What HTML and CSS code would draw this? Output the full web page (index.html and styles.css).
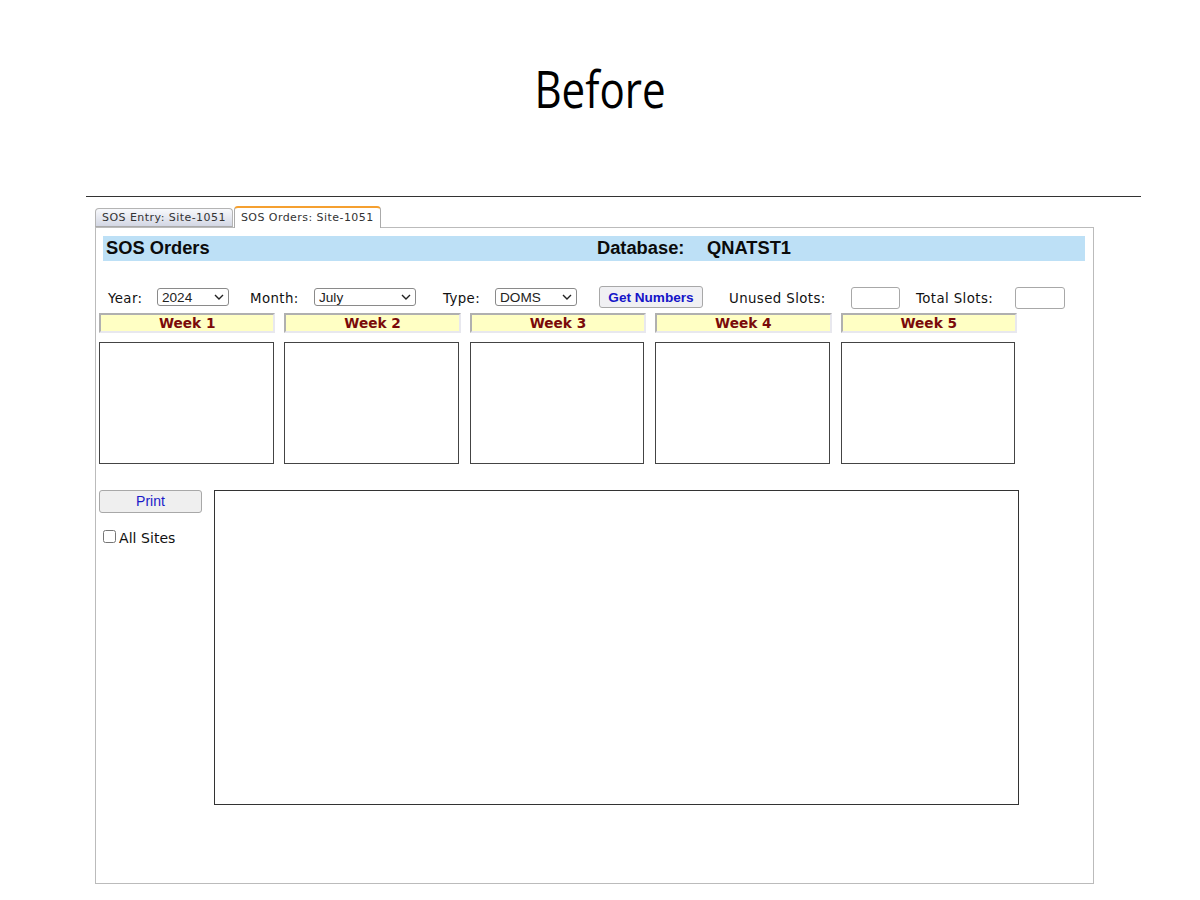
FILE: index.html
```html
<!DOCTYPE html>
<html lang="en">
<head>
<meta charset="utf-8">
<title>Before</title>
<link rel="stylesheet" href="styles.css">
</head>
<body>
<h1 class="title"><span class="title-text">Before</span></h1>
<div class="frame">
  <div class="tabs">
    <div class="tab">SOS Entry: Site-1051</div>
    <div class="tab active">SOS Orders: Site-1051</div>
  </div>
  <div class="panel">
    <div class="banner">
      <span class="banner-name">SOS Orders</span>
      <span class="banner-db">Database:</span>
      <span class="banner-value">QNATST1</span>
    </div>
    <div class="filters">
      <label class="lbl lbl-year">Year:</label>
      <select class="sel sel-year"><option>2024</option></select>
      <label class="lbl lbl-month">Month:</label>
      <select class="sel sel-month"><option>July</option></select>
      <label class="lbl lbl-type">Type:</label>
      <select class="sel sel-type"><option>DOMS</option></select>
      <button class="get" type="button">Get Numbers</button>
      <label class="lbl lbl-unused">Unused Slots:</label>
      <input class="slot slot-unused" type="text">
      <label class="lbl lbl-total">Total Slots:</label>
      <input class="slot" type="text">
    </div>
    <div class="weeks">
      <div class="week"><div class="week-head">Week 1</div><div class="week-box"></div></div>
      <div class="week"><div class="week-head">Week 2</div><div class="week-box"></div></div>
      <div class="week"><div class="week-head">Week 3</div><div class="week-box"></div></div>
      <div class="week"><div class="week-head">Week 4</div><div class="week-box"></div></div>
      <div class="week"><div class="week-head">Week 5</div><div class="week-box"></div></div>
    </div>
    <div class="lower">
      <div class="side">
        <button class="print" type="button">Print</button>
        <label class="all"><input class="check" type="checkbox">All Sites</label>
      </div>
      <div class="report"></div>
    </div>
  </div>
</div>
</body>
</html>
```
FILE: styles.css
```css
* { box-sizing: border-box; }
html, body { margin: 0; padding: 0; background: #fff; }
body { width: 1200px; height: 900px; overflow: hidden; font-family: "DejaVu Sans", Verdana, sans-serif; color: #111; }

.title {
  margin: 0;
  height: 196px;
  padding-top: 52px;
  text-align: center;
  font-family: "Open Sans", sans-serif;
  font-weight: 400;
  font-size: 52px;
  line-height: 72px;
  color: #000;
}
.title-text { display: inline-block; transform: scaleX(0.81); }

.frame { margin-left: 86px; width: 1055px; border-top: 1px solid #333; padding: 9px 0 0 9px; }

.tabs { display: flex; align-items: flex-end; height: 21px; gap: 1px; position: relative; z-index: 1; }
.tab {
  height: 19px;
  padding: 0 6px;
  font-size: 11px;
  line-height: 18px;
  letter-spacing: 0.45px;
  color: #333;
  white-space: nowrap;
  background: linear-gradient(#f8f9fc, #d3d7e4);
  border: 1px solid #b4b4b4;
  border-bottom: 1px solid #aaa;
  border-radius: 4px 4px 0 0;
}
.tab.active {
  height: 22px;
  line-height: 19px;
  background: #fff;
  border-color: #aaa;
  border-top: 2px solid #f5a030;
  border-bottom: none;
  margin-bottom: -1px;
}

.panel { width: 999px; height: 657px; border: 1px solid #bbb; padding: 8px 8px 0 3px; }

.banner {
  display: flex;
  align-items: center;
  margin-left: 4px;
  width: 982px;
  height: 25px;
  background: #bde0f6;
  font-family: "Liberation Sans", Arial, sans-serif;
  font-size: 18.3px;
  font-weight: bold;
  color: #0b0b0b;
  padding: 0 0 2px 3px;
}
.banner-name { width: 491px; }
.banner-db { width: 110px; }

.filters { display: flex; align-items: center; height: 24px; margin-top: 25px; font-size: 13.33px; }
.lbl { white-space: nowrap; letter-spacing: 0.4px; }
.lbl-year { margin-left: 9px; width: 49px; }
.lbl-month { margin-left: 21px; width: 64px; }
.lbl-type { margin-left: 27px; width: 52px; }
.lbl-unused { margin-left: 26px; width: 122px; }
.lbl-total { margin-left: 16px; width: 99px; }

.sel {
  appearance: none;
  height: 18px;
  margin-bottom: 2px;
  padding: 0 0 0 4px;
  font-family: "Liberation Sans", Arial, sans-serif;
  font-size: 13.6px;
  color: #222;
  background: #fff url("data:image/svg+xml,%3Csvg xmlns='http://www.w3.org/2000/svg' width='10' height='6' viewBox='0 0 10 6'%3E%3Cpath d='M1 1l4 4 4-4' fill='none' stroke='%23222' stroke-width='1.4'/%3E%3C/svg%3E") no-repeat right 4px center;
  border: 1px solid #8a8a8a;
  border-radius: 3px;
}
.sel-year { width: 72px; }
.sel-month { width: 102px; }
.sel-type { width: 82px; }

.get {
  margin: 0 0 2px 22px;
  width: 104px;
  height: 22px;
  padding: 0;
  font-family: "Liberation Sans", Arial, sans-serif;
  font-size: 13.6px;
  font-weight: bold;
  color: #1414c8;
  background: #f0f0f3;
  border: 1px solid #a8a8a8;
  border-radius: 3px;
}
.slot { width: 50px; height: 22px; margin-bottom: 1px; padding: 0; background: #fff; border: 1px solid #a8a8a8; border-radius: 3px; }
.slot-unused { width: 49px; }

.weeks { display: flex; gap: 9px; margin-top: 3px; }
.week { width: 176.4px; }
.week-head {
  height: 20px;
  background: #ffffc4;
  border: 2px solid;
  border-color: #b0b0b0 #e8e8ee #e8e8ee #b0b0b0;
  font-size: 13.7px;
  font-weight: bold;
  line-height: 17px;
  text-align: center;
  color: #7a0a0a;
}
.week-box { width: 174.5px; height: 122px; margin-top: 9px; border: 1px solid #444; background: #fff; }

.lower { display: flex; margin-top: 26px; }
.side { width: 115px; }
.print {
  display: block;
  width: 103px;
  height: 23px;
  padding: 0 0 2px;
  font-family: "Liberation Sans", Arial, sans-serif;
  font-size: 14px;
  color: #1a1ac8;
  background: #efefef;
  border: 1px solid #a8a8a8;
  border-radius: 3px;
}
.all { display: flex; align-items: center; margin: 17px 0 0 4px; font-size: 14px; color: #111; letter-spacing: 0.05px; }
.check { width: 13px; height: 13px; margin: 0 3px 3px 0; }
.report { width: 805px; height: 315px; border: 1px solid #333; background: #fff; }
```
